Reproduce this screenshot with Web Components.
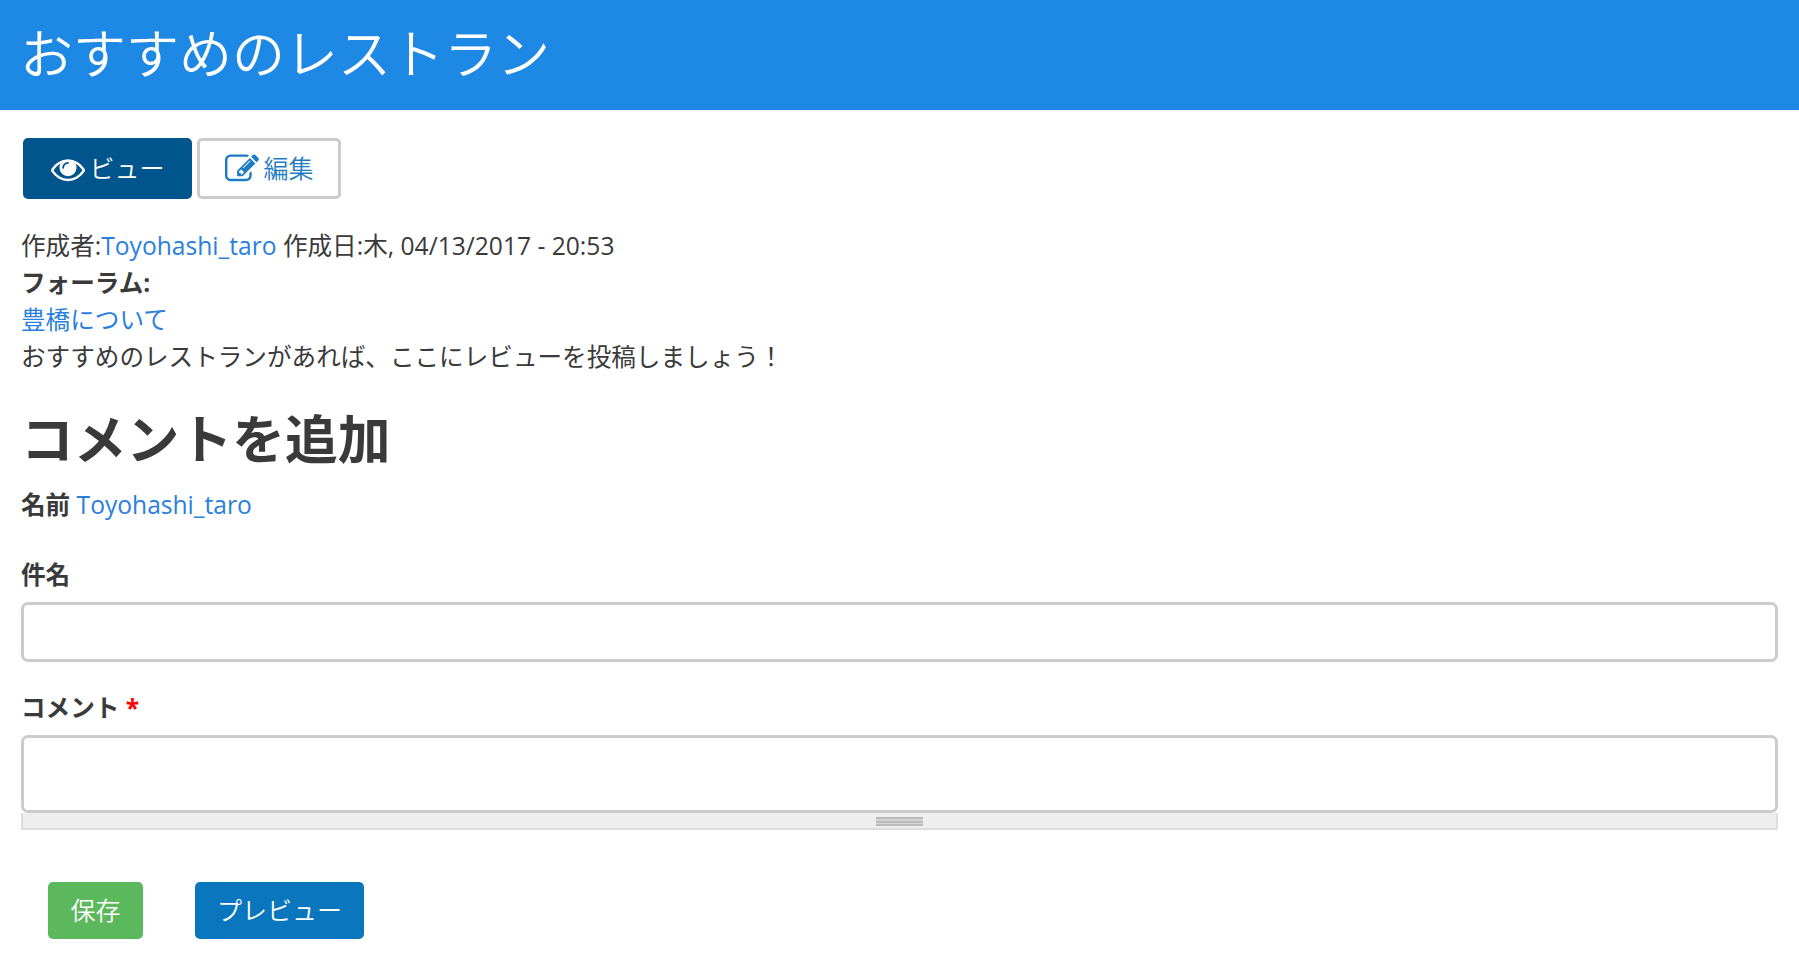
<!DOCTYPE html>
<html lang="ja"><head><meta charset="utf-8">
<style>
html,body{margin:0;padding:0;background:#fff}
body{font:24.6px/36.9px "Open Sans","Noto Sans CJK JP",sans-serif;color:#3a3a3a}
</style></head><body>
<x-page>
  <x-banner slot="banner">おすすめのレストラン</x-banner>
  <x-tabs>
    <x-tab active icon="eye">ビュー</x-tab>
    <x-tab icon="edit">編集</x-tab>
  </x-tabs>
  <x-meta></x-meta>
  <x-comment-form></x-comment-form>
</x-page>
<script>
const FONT='"Open Sans","Noto Sans CJK JP",sans-serif';
const ICONS={
eye:'M1664 960q-152-236-381-353 61 104 61 225 0 185-131.5 316.5t-316.5 131.5-316.5-131.5-131.5-316.5q0-121 61-225-229 117-381 353 133 205 333.5 326.5t434.5 121.5 434.5-121.5 333.5-326.5zm-720-384q0-20-14-34t-34-14q-125 0-214.5 89.5t-89.5 214.5q0 20 14 34t34 14 34-14 14-34q0-86 61-147t147-61q20 0 34-14t14-34zm848 384q0 34-20 69-140 230-376.5 368.5t-499.5 138.5-499.5-139-376.5-368q-20-35-20-69t20-69q140-229 376.5-368t499.5-139 499.5 139 376.5 368q20 35 20 69z',
edit:'M888 1184l116-116-152-152-116 116v56h96v96h56zm440-720q-16-16-33 1l-350 350q-17 17-1 33t33-1l350-350q17-17 1-33zm80 594v190q0 119-84.5 203.5t-203.5 84.5h-832q-119 0-203.5-84.5t-84.5-203.5v-832q0-119 84.5-203.5t203.5-84.5h832q63 0 117 25 15 7 18 23 3 17-9 29l-49 49q-14 14-32 8-23-6-45-6h-832q-66 0-113 47t-47 113v832q0 66 47 113t113 47h832q66 0 113-47t47-113v-126q0-13 9-22l64-64q15-15 35-7t20 29zm-96-738l288 288-672 672h-288v-288zm444 132l-92 92-288-288 92-92q28-28 68-28t68 28l152 152q28 28 28 68t-28 68z'};
function def(name,html,init){customElements.define(name,class extends HTMLElement{
  constructor(){super();this.attachShadow({mode:'open'}).innerHTML=html;}
  connectedCallback(){if(init)init(this);}
});}
def('x-page',`<style>:host{display:block}main{display:block;padding:28px 21px 0}</style><slot name="banner"></slot><main><slot></slot></main>`);
def('x-banner',`<style>:host{display:block;height:110px;box-sizing:border-box;background:#1e88e5;color:#fff;padding:0 20px;font:350 53px/108px ${FONT};white-space:nowrap}</style><slot></slot>`);
def('x-tabs',`<style>:host{display:flex;gap:5px;margin-left:2px;height:61px}</style><slot></slot>`);
def('x-tab',`<style>
:host{display:flex;align-items:center;box-sizing:border-box;height:61px;border-radius:5px;border:3px solid #ccc;background:#fff;color:#1f7cc4;padding:0 24.5px;font-size:25px;font-weight:350;gap:5px}
:host([active]){background:#00558c;border-color:#00558c;color:#fff}
svg{width:34px;height:34px;fill:currentColor;display:block}
</style><svg viewBox="0 0 1792 1792"><path id="p"/></svg><slot></slot>`,el=>{el.shadowRoot.getElementById('p').setAttribute('d',ICONS[el.getAttribute('icon')]);});
const A='a{color:#2a80dc;text-decoration:none}';
def('x-meta',`<style>:host{display:block;margin-top:29px}${A}b{font-weight:700}div{white-space:nowrap}</style>
<div>作成者:<a href="#">Toyohashi_taro</a> 作成日:木, 04/13/2017 - 20:53</div>
<div><b>フォーラム:</b></div>
<div><a href="#">豊橋について</a></div>
<div>おすすめのレストランがあれば、ここにレビューを投稿しましょう！</div>`);
def('x-field',`<style>
:host{display:block}
label{display:block;font-weight:700;line-height:36px;margin-bottom:var(--lm,9px);white-space:nowrap}
.req{color:#f00}
.box{box-sizing:border-box;width:100%;border:3px solid #ccc;border-radius:7px;background:#fff;height:var(--h,60px)}
.grip{box-sizing:border-box;height:17px;background:#eee;border:solid #ddd;border-width:0 2px 2px;display:flex;justify-content:center;padding-top:4px}
.grip i{display:block;width:47px;height:9px;background:repeating-linear-gradient(#bbb 0 2px,#d5d5d5 2px 3.5px)}
</style><label><slot></slot></label><div class="box"></div><div class="grip" part="grip"><i></i></div>`,el=>{
  if(!el.hasAttribute('grip'))el.shadowRoot.querySelector('.grip').remove();
  if(el.hasAttribute('required')){const s=document.createElement('span');s.className='req';s.textContent=' *';el.shadowRoot.querySelector('label').append(s);}
});
def('x-button',`<style>:host{display:flex;align-items:center;justify-content:center;box-sizing:border-box;height:57px;border-radius:5px;padding:0 var(--pad,22.5px);color:#fff;font-size:25px;font-weight:350;background:var(--bg)}</style><slot></slot>`);
def('x-comment-form',`<style>
:host{display:block}
h2{margin:28px 0 0;font:700 52.8px/70px ${FONT};white-space:nowrap}
.name{margin:13px 0 0;white-space:nowrap}
b{font-weight:700}
${A}
.f1{margin-top:33px}
.f2{margin-top:28px;--h:78px;--lm:9px}
.acts{display:flex;gap:52px;margin:52px 0 0 27px}
</style>
<h2>コメントを追加</h2>
<div class="name"><b>名前</b> <a href="#">Toyohashi_taro</a></div>
<x-field class="f1">件名</x-field>
<x-field class="f2" required grip>コメント</x-field>
<div class="acts"><x-button style="--bg:#5cb85c">保存</x-button><x-button style="--bg:#0a76bd;--pad:22px">プレビュー</x-button></div>`);
</script>
</body></html>
